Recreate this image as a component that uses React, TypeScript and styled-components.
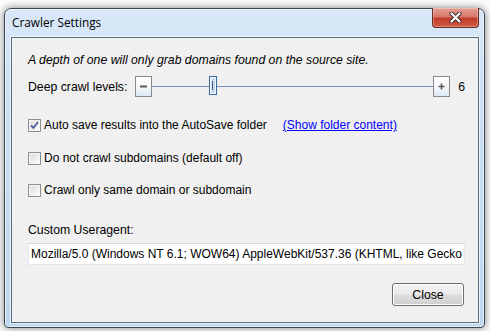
import React from 'react';
import styled, { createGlobalStyle } from 'styled-components';

const GlobalStyle = createGlobalStyle`
	html, body {
		margin: 0;
		padding: 0;
		background: #fdfdfd;
	}
	body {
		width: 490px;
		height: 331px;
		overflow: hidden;
		padding: 8px 5px 3px 4px;
		box-sizing: border-box;
	}
`;

const Window = styled.div`
	width: 481px;
	height: 320px;
	box-sizing: border-box;
	border: 1px solid #3c4650;
	border-radius: 7px 7px 4px 4px;
	background: linear-gradient(180deg, #d9e8f8 0%, #cbe0f5 30%, #bfd8f1 100%);
	box-shadow: 0 0 8px rgba(0, 0, 0, 0.5), inset 0 0 0 1px rgba(255, 255, 255, 0.55);
	display: flex;
	flex-direction: column;
`;

const TitleBar = styled.div`
	height: 28px;
	display: flex;
	justify-content: space-between;
	align-items: flex-start;
`;

const Title = styled.div`
	font-family: "Open Sans", "Noto Sans", sans-serif;
	font-size: 11.8px;
	color: #000;
	padding: 5px 0 0 7px;
	line-height: 16px;
`;

const CloseX = styled.div`
	width: 47px;
	height: 20px;
	margin: -1px 5px 0 0;
	box-sizing: border-box;
	border: 1px solid #6b2a22;
	border-top: none;
	border-radius: 0 0 4px 4px;
	background: linear-gradient(180deg, #e4a194 0%, #d7786b 45%, #c23c2a 55%, #cf5a44 100%);
	box-shadow: inset 0 0 0 1px rgba(255, 255, 255, 0.3);
	display: flex;
	align-items: center;
	justify-content: center;
`;

const Panel = styled.div`
	flex: 1;
	margin: 0 5px 4px 6px;
	border: 1px solid #5d6b7a;
	box-shadow: 0 0 0 1px rgba(255, 255, 255, 0.6);
	background: #f0f0f0;
	padding: 14px 13px 0 16px;
	display: flex;
	flex-direction: column;
	font-family: "Liberation Sans", Arial, sans-serif;
	font-size: 12.25px;
	color: #000;
`;

const Hint = styled.div`
	font-style: italic;
	line-height: 16px;
`;

const SliderRow = styled.div`
	margin-top: 8px;
	height: 21px;
	display: flex;
	align-items: center;
`;

const Label = styled.span`
	line-height: 16px;
	margin-right: 8px;
`;

const StepButton = styled.div`
	width: 17px;
	height: 21px;
	box-sizing: border-box;
	border: 1px solid #8a8a8a;
	background: linear-gradient(180deg, #ffffff 0%, #f7f9fb 50%, #dbe7f3 100%);
	display: flex;
	align-items: center;
	justify-content: center;
	flex-shrink: 0;
`;

const Track = styled.div`
	flex: 1;
	height: 21px;
	position: relative;
	&::before {
		content: '';
		position: absolute;
		left: 0;
		right: 0;
		top: 10px;
		height: 1px;
		background: #6e98c9;
	}
`;

const Thumb = styled.div`
	position: absolute;
	top: 0;
	width: 8px;
	height: 19px;
	box-sizing: border-box;
	border: 1px solid #3c6a9c;
	background: linear-gradient(90deg, #dce9f6, #b9d1ec);
	box-shadow: inset 0 0 0 1px #f4f8fc;
	&::after {
		content: '';
		position: absolute;
		left: 2px;
		top: 4px;
		width: 1px;
		height: 9px;
		background: #3c5a80;
	}
`;

const Value = styled.span`
	margin-left: 8px;
	line-height: 16px;
`;

const CheckRow = styled.label<{ $gap: number }>`
	margin-top: ${p => p.$gap}px;
	height: 16px;
	display: flex;
	align-items: center;
	white-space: nowrap;
	font-size: 12px;
`;

const Box = styled.span`
	width: 13px;
	height: 13px;
	box-sizing: border-box;
	border: 1px solid #8e8f8f;
	background: linear-gradient(135deg, #dcdcdc 0%, #f0f0f0 60%, #ffffff 100%);
	box-shadow: inset 0 0 0 1px #f5f5f5;
	margin-right: 3px;
	display: flex;
	align-items: center;
	justify-content: center;
	flex-shrink: 0;
`;

const Link = styled.a`
	color: #0000ff;
	text-decoration: underline;
	margin-left: 16px;
	cursor: pointer;
`;

const FieldLabel = styled.div`
	margin-top: 24px;
	line-height: 16px;
`;

const Field = styled.input`
	margin-top: 5px;
	height: 22px;
	width: 100%;
	box-sizing: border-box;
	border: 1px solid #e3e5ea;
	border-top-color: #d4d6db;
	background: #fff;
	font-family: "Liberation Sans", Arial, sans-serif;
	font-size: 12px;
	padding: 0 2px;
	outline: none;
	color: #000;
`;

const Footer = styled.div`
	margin-top: 18px;
	display: flex;
	justify-content: flex-end;
	padding-right: 1px;
`;

const Button = styled.button`
	width: 72px;
	height: 23px;
	box-sizing: border-box;
	border: 1px solid #707070;
	border-radius: 3px;
	background: linear-gradient(180deg, #f2f2f2 0%, #ebebeb 48%, #dddddd 52%, #cfcfcf 100%);
	box-shadow: inset 0 0 0 1px #fcfcfc;
	font-family: "Liberation Sans", Arial, sans-serif;
	font-size: 12.25px;
	color: #000;
	padding: 0;
`;

const Check = () => (
	<svg width="9" height="9" viewBox="0 0 9 9">
		<path d="M1 4.5 L3.5 7 L8 1" fill="none" stroke="#4a5f97" strokeWidth="1.8" />
	</svg>
);

const CheckBox = ({ checked, gap, children }: { checked?: boolean; gap: number; children: React.ReactNode }) => (
	<CheckRow $gap={gap}>
		<Box>{checked && <Check />}</Box>
		{children}
	</CheckRow>
);

const userAgent = 'Mozilla/5.0 (Windows NT 6.1; WOW64) AppleWebKit/537.36 (KHTML, like Gecko) Chrome/41.0.2228.0 Safari/537.36';

const App = () => {
	const level = 6;
	const min = 1;
	const max = 24;
	const pos = ((level - min) / (max - min)) * 100;

	return (
		<>
			<GlobalStyle />
			<Window>
				<TitleBar>
					<Title>Crawler Settings</Title>
					<CloseX>
						<svg width="13" height="11" viewBox="0 0 13 11">
							<path d="M2.5 1.5 L10.5 9.5 M10.5 1.5 L2.5 9.5" stroke="#3b2a2a" strokeWidth="4" strokeLinecap="round" />
							<path d="M2.5 1.5 L10.5 9.5 M10.5 1.5 L2.5 9.5" stroke="#ffffff" strokeWidth="2.2" strokeLinecap="round" />
						</svg>
					</CloseX>
				</TitleBar>
				<Panel>
					<Hint>A depth of one will only grab domains found on the source site.</Hint>
					<SliderRow>
						<Label>Deep crawl levels:</Label>
						<StepButton>
							<svg width="7" height="3" viewBox="0 0 7 3"><rect width="7" height="2" y="0.5" fill="#5a5a5a" /></svg>
						</StepButton>
						<Track>
							<Thumb style={{ left: `calc(${pos}% - 4px)` }} />
						</Track>
						<StepButton>
							<svg width="7" height="7" viewBox="0 0 7 7"><path d="M3.5 0.5 V6.5 M0.5 3.5 H6.5" stroke="#5a5a5a" strokeWidth="1.6" /></svg>
						</StepButton>
						<Value>{level}</Value>
					</SliderRow>
					<CheckBox checked gap={20}>
						Auto save results into the AutoSave folder
						<Link>(Show folder content)</Link>
					</CheckBox>
					<CheckBox gap={17}>Do not crawl subdomains (default off)</CheckBox>
					<CheckBox gap={16}>Crawl only same domain or subdomain</CheckBox>
					<FieldLabel>Custom Useragent:</FieldLabel>
					<Field defaultValue={userAgent} />
					<Footer>
						<Button>Close</Button>
					</Footer>
				</Panel>
			</Window>
		</>
	);
};

export default App;
